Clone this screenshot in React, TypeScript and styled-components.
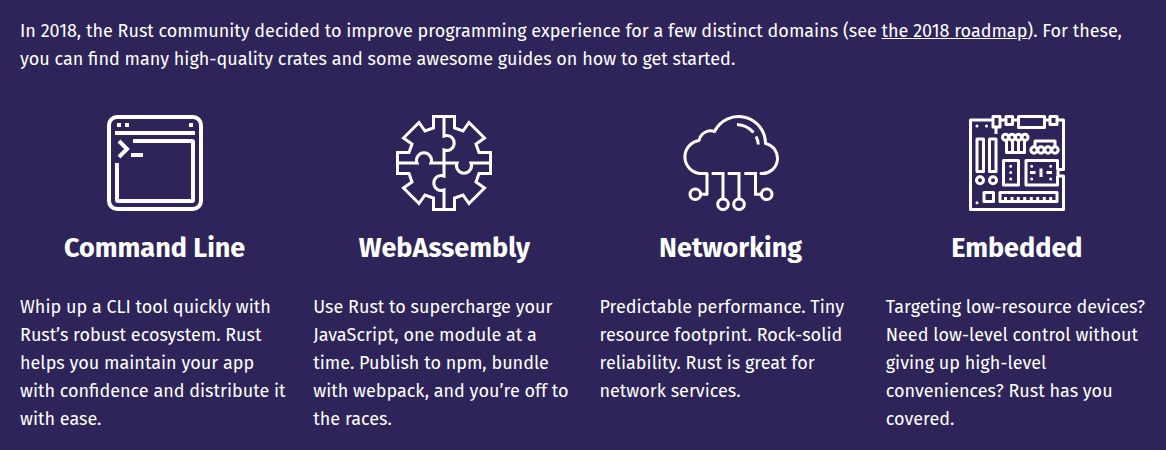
import React from "react";
import styled, { createGlobalStyle } from "styled-components";

const GlobalStyle = createGlobalStyle`
  *, *::before, *::after { box-sizing: border-box; }
  body {
    margin: 0;
    background: #2e2459;
    color: #fff;
    font-family: "Fira Sans", "Noto Sans", "Open Sans", sans-serif;
    font-size: 18px;
    font-weight: 400;
    line-height: 28px;
  }
`;

const Section = styled.section`
  min-height: 100vh;
  padding: 17px 18px 16px 20px;
`;

const Intro = styled.p`
  margin: 0;
`;

const TextLink = styled.a`
  color: inherit;
  text-decoration: underline;
`;

const Domains = styled.div`
  display: grid;
  grid-template-columns: 269fr 262fr 262fr 262fr;
  column-gap: 24px;
  margin-top: 42px;
`;

const Domain = styled.article`
  display: flex;
  flex-direction: column;
`;

const Icon = styled.svg`
  display: block;
  width: 96px;
  height: 96px;
  align-self: center;
  fill: none;
  stroke: #fff;
  stroke-width: ${(p: { $weight?: number }) => p.$weight ?? 3};
`;

const Title = styled.h3`
  margin: 17px 0 0;
  font-size: 27px;
  font-weight: 700;
  line-height: 40px;
  text-align: center;
`;

const Description = styled.p`
  margin: 25px 0 0;
`;

function CommandLineIcon() {
  return (
    <Icon viewBox="0 0 96 96" $weight={4} aria-hidden="true">
      <rect x="2" y="2" width="92" height="92" rx="8" />
      <path d="M10 10h4M18 10h4M82 10h4M8 18h80M24 40h12" />
      <path d="M26 26H85Q86 26 86 27V85Q86 86 85 86H11Q10 86 10 85V48" />
      <path d="M12 26l8 8-8 8" />
    </Icon>
  );
}

function WebAssemblyIcon() {
  return (
    <Icon viewBox="0 0 96 96" aria-hidden="true">
      <path d="M37.5 1.5H58.5V13L67 16L73 7.5L88.5 23L80 29L83 37.5H94.5V58.5H83L80 67L88.5 73L73 88.5L67 80L58.5 83V94.5H37.5V83L29 80L23 88.5L7.5 73L16 67L13 58.5H1.5V37.5H13L16 29L7.5 23L23 7.5L29 16L37.5 13Z" />
      <path d="M48 1V21A7.5 7.5 0 1 1 48 35V61A7.5 7.5 0 1 0 48 75V95" />
      <path d="M1 48H21A7.5 7.5 0 1 1 35 48H61A7.5 7.5 0 1 0 75 48H95" />
    </Icon>
  );
}

function NetworkingIcon() {
  return (
    <Icon viewBox="0 0 96 96" aria-hidden="true">
      <path
        d="M24 79.3V58.5H18A16.6 16.6 0 0 1 16 25.5A12 12 0 0 1 31.5 16.5A26.9 26.9 0 0 1 82.5 28.5A15.2 15.2 0 0 1 78 58.5"
        strokeLinecap="round"
        strokeLinejoin="round"
      />
      <path d="M24 79.3H18M28.7 58.5H40V83.5M44.7 58.5H56V83.5M61.3 58.5H72.5V79.3H78" />
      <circle cx="12.3" cy="79.3" r="5.3" />
      <circle cx="40" cy="89.3" r="5.3" />
      <circle cx="56" cy="89.3" r="5.3" />
      <circle cx="83.7" cy="79.3" r="5.3" />
      <path d="M54 9.5Q64 10 70.5 17.5M73 21.5Q75 25 75.3 29.5" />
    </Icon>
  );
}

function EmbeddedIcon() {
  return (
    <Icon viewBox="0 0 96 96" strokeLinejoin="round" aria-hidden="true">
      <path d="M24 5H1.5V94.5H94.5V61H89V54.5H94.5V5H88" />
      <path d="M31 5H37M43.5 5H49.5M75.5 5H81M27 12V19" />
      <path d="M24 1.5H31V12H24ZM37 1.5H43.5V9.5H37ZM49.5 1.5H75.5V12.5H49.5ZM81 1.5H88V9.5H81Z" />
      <path d="M8 24H14.5V56.5H8ZM20.5 24H27V56.5H20.5Z" />
      <circle cx="11" cy="65.3" r="3.5" />
      <circle cx="24" cy="65.3" r="3.5" />
      <path d="M15 77.5H24.5V86.5H15ZM31 77.5H88V86.5H31Z" />
      <path d="M36.5 82V85M43 82V85M49.3 82V85M55.7 82V85M62.3 82V85M68.7 82V85M75.3 82V85M81.7 82V85" />
      <path d="M34.5 45.5H49.5V70H34.5ZM88.5 54.5V45.5H57V70H88.5V61" />
      <path d="M61 57.5H66.5M77.5 57.5H83M72 53.5V62" />
      <circle cx="36.5" cy="22.3" r="3" />
      <circle cx="43" cy="22.3" r="3" />
      <circle cx="49.5" cy="22.3" r="3" />
      <circle cx="56" cy="22.3" r="3" />
      <path d="M37.5 25V37.5H55.5V25M43.5 25V37M49.5 25V37" />
      <path d="M66 32V26H86V32" />
      <circle cx="65" cy="35" r="3.2" />
      <circle cx="72" cy="35" r="3.2" />
      <circle cx="79" cy="35" r="3.2" />
      <circle cx="86" cy="35" r="3.2" />
      <path
        strokeLinecap="round"
        d="M8 11h.01M17.5 11h.01M8 87.7h.01M41.7 51.3h.01M41.7 57.5h.01M41.7 64h.01M62.7 51.3h.01M81.7 51.3h.01M62.7 64h.01M81.7 64h.01"
      />
    </Icon>
  );
}

const domains = [
  {
    title: "Command Line",
    Glyph: CommandLineIcon,
    text: "Whip up a CLI tool quickly with Rust’s robust ecosystem. Rust helps you maintain your app with confidence and distribute it with ease.",
  },
  {
    title: "WebAssembly",
    Glyph: WebAssemblyIcon,
    text: "Use Rust to supercharge your JavaScript, one module at a time. Publish to npm, bundle with webpack, and you’re off to the races.",
  },
  {
    title: "Networking",
    Glyph: NetworkingIcon,
    text: "Predictable performance. Tiny resource footprint. Rock-solid reliability. Rust is great for network services.",
  },
  {
    title: "Embedded",
    Glyph: EmbeddedIcon,
    text: "Targeting low-resource devices? Need low-level control without giving up high-level conveniences? Rust has you covered.",
  },
];

export default function App() {
  return (
    <>
      <GlobalStyle />
      <Section>
        <Intro>
          In 2018, the Rust community decided to improve programming experience for a few distinct
          domains (see <TextLink href="#roadmap">the 2018 roadmap</TextLink>). For these, you can
          find many high-quality crates and some awesome guides on how to get started.
        </Intro>
        <Domains>
          {domains.map(({ title, Glyph, text }) => (
            <Domain key={title}>
              <Glyph />
              <Title>{title}</Title>
              <Description>{text}</Description>
            </Domain>
          ))}
        </Domains>
      </Section>
    </>
  );
}
